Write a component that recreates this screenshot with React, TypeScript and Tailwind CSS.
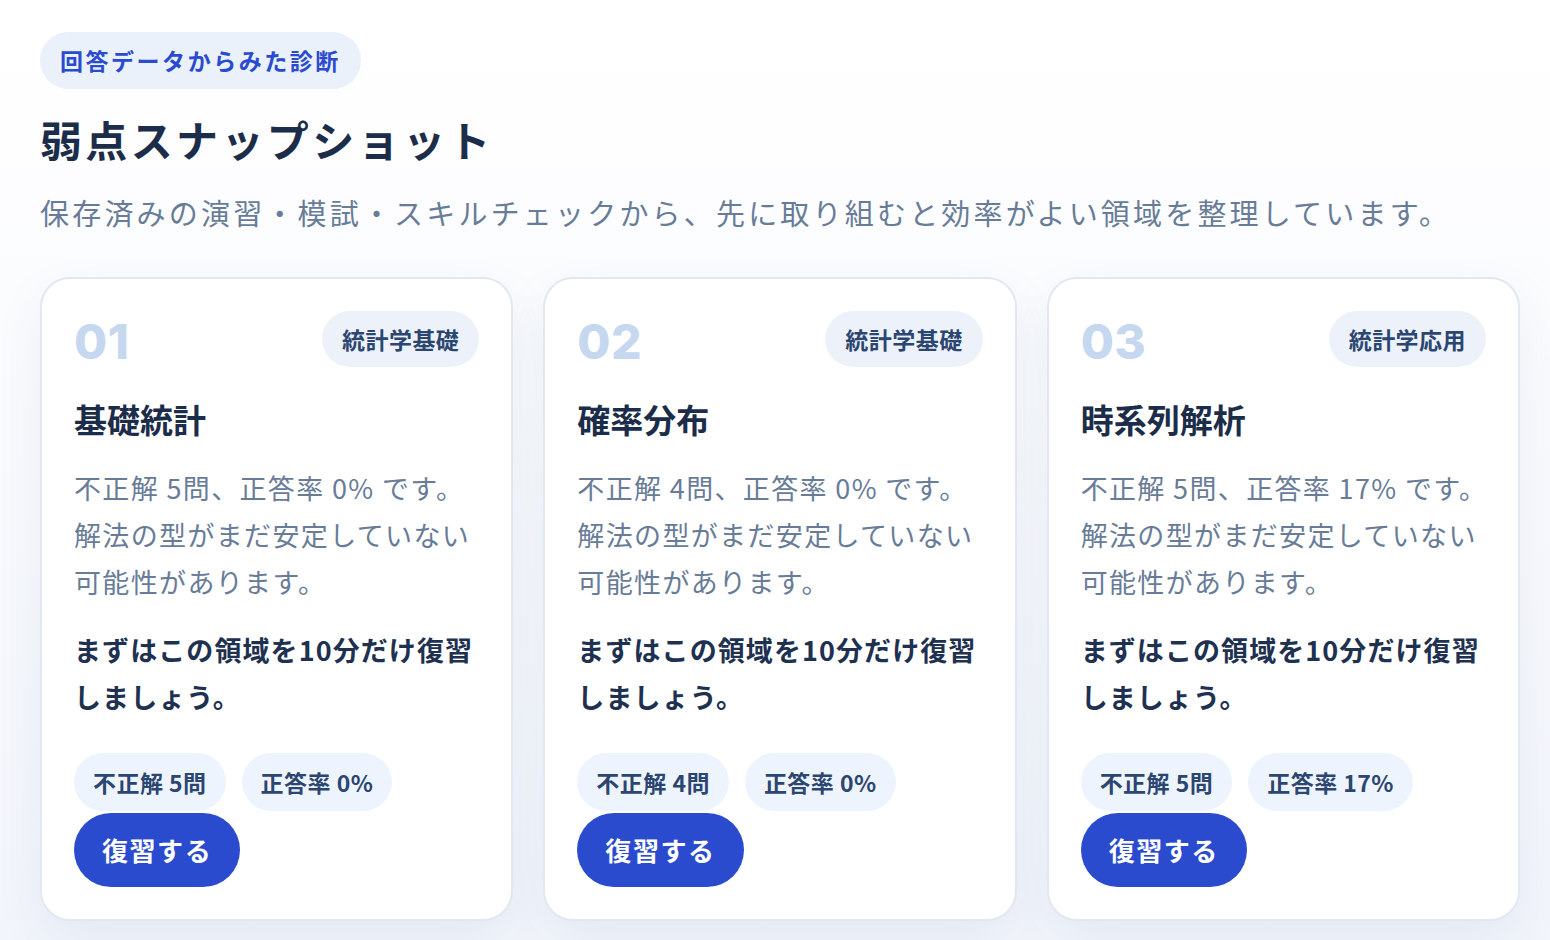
import React from "react";

type Area = {
  no: string;
  tag: string;
  title: string;
  wrong: number;
  rate: number;
};

const AREAS: Area[] = [
  { no: "01", tag: "統計学基礎", title: "基礎統計", wrong: 5, rate: 0 },
  { no: "02", tag: "統計学基礎", title: "確率分布", wrong: 4, rate: 0 },
  { no: "03", tag: "統計学応用", title: "時系列解析", wrong: 5, rate: 17 },
];

const JP = { fontFamily: '"Noto Sans CJK JP", "Noto Sans", sans-serif' };

function AreaCard({ a }: { a: Area }) {
  return (
    <div className="flex flex-col rounded-[30px] border-2 border-[#e1e8f2] bg-white p-[32px] shadow-[0_18px_50px_rgba(40,70,130,0.07)]">
      <div className="flex items-start justify-between">
        <div className="pt-[7px] text-[48px] font-extrabold leading-[48px] tracking-[0.01em] text-[#c6d7f0]" style={{ fontFamily: "Inter, sans-serif" }}>
          {a.no}
        </div>
        <span className="rounded-full bg-[#edf2fa] px-[20px] py-[11px] text-[23px] font-bold leading-[34px] tracking-[0.02em] text-[#2b4670]">{a.tag}</span>
      </div>
      <h3 className="mt-[28px] text-[33px] font-bold leading-[48px] text-[#1c2d4a]">{a.title}</h3>
      <p className="mt-[21px] text-[27px] leading-[47px] tracking-[0.05em] text-[#687c98]">
        <span className="block whitespace-nowrap">不正解 {a.wrong}問、正答率 {a.rate}% です。</span>
        解法の型がまだ安定していない可能性があります。
      </p>
      <p className="mt-[21px] text-[27px] font-bold leading-[47px] tracking-[0.04em] text-[#1e3150]">
        まずはこの領域を10分だけ復習しましょう。
      </p>
      <div className="mt-[33px] flex flex-wrap gap-[16px]">
        <span className="rounded-full bg-[#eef4fd] px-[19px] py-[12px] text-[23px] font-bold leading-[34px] tracking-[0.02em] text-[#2b4670]">不正解 {a.wrong}問</span>
        <span className="rounded-full bg-[#eef4fd] px-[19px] py-[12px] text-[23px] font-bold leading-[34px] tracking-[0.02em] text-[#2b4670]">正答率 {a.rate}%</span>
      </div>
      <div className="mt-[2px]">
        <button className="rounded-full bg-[#2b4bcf] px-[28px] py-[18px] text-[26px] font-bold leading-[38px] tracking-[0.06em] text-white">復習する</button>
      </div>
    </div>
  );
}

export default function App() {
  return (
    <div className="min-h-[940px] w-full bg-gradient-to-b from-[#ffffff] to-[#f2f5fb] px-[40px] pt-[32px] pb-[20px]" style={JP}>
      <span className="inline-block rounded-full bg-[#eaf1fb] px-[20px] py-[12px] text-[23px] font-bold leading-[33px] tracking-[0.11em] text-[#2a4bd0]">
        回答データからみた診断
      </span>
      <h1 className="mt-[20px] text-[42px] font-bold leading-[60px] tracking-[0.08em] text-[#1c2d4a]">弱点スナップショット</h1>
      <p className="mt-[21px] text-[29px] leading-[44px] tracking-[0.11em] text-[#687c98]">
        保存済みの演習・模試・スキルチェックから、先に取り組むと効率がよい領域を整理しています。
      </p>
      <div className="mt-[43px] grid w-[1480px] grid-cols-3 gap-[30px]">
        {AREAS.map((a) => (
          <AreaCard key={a.no} a={a} />
        ))}
      </div>
    </div>
  );
}
